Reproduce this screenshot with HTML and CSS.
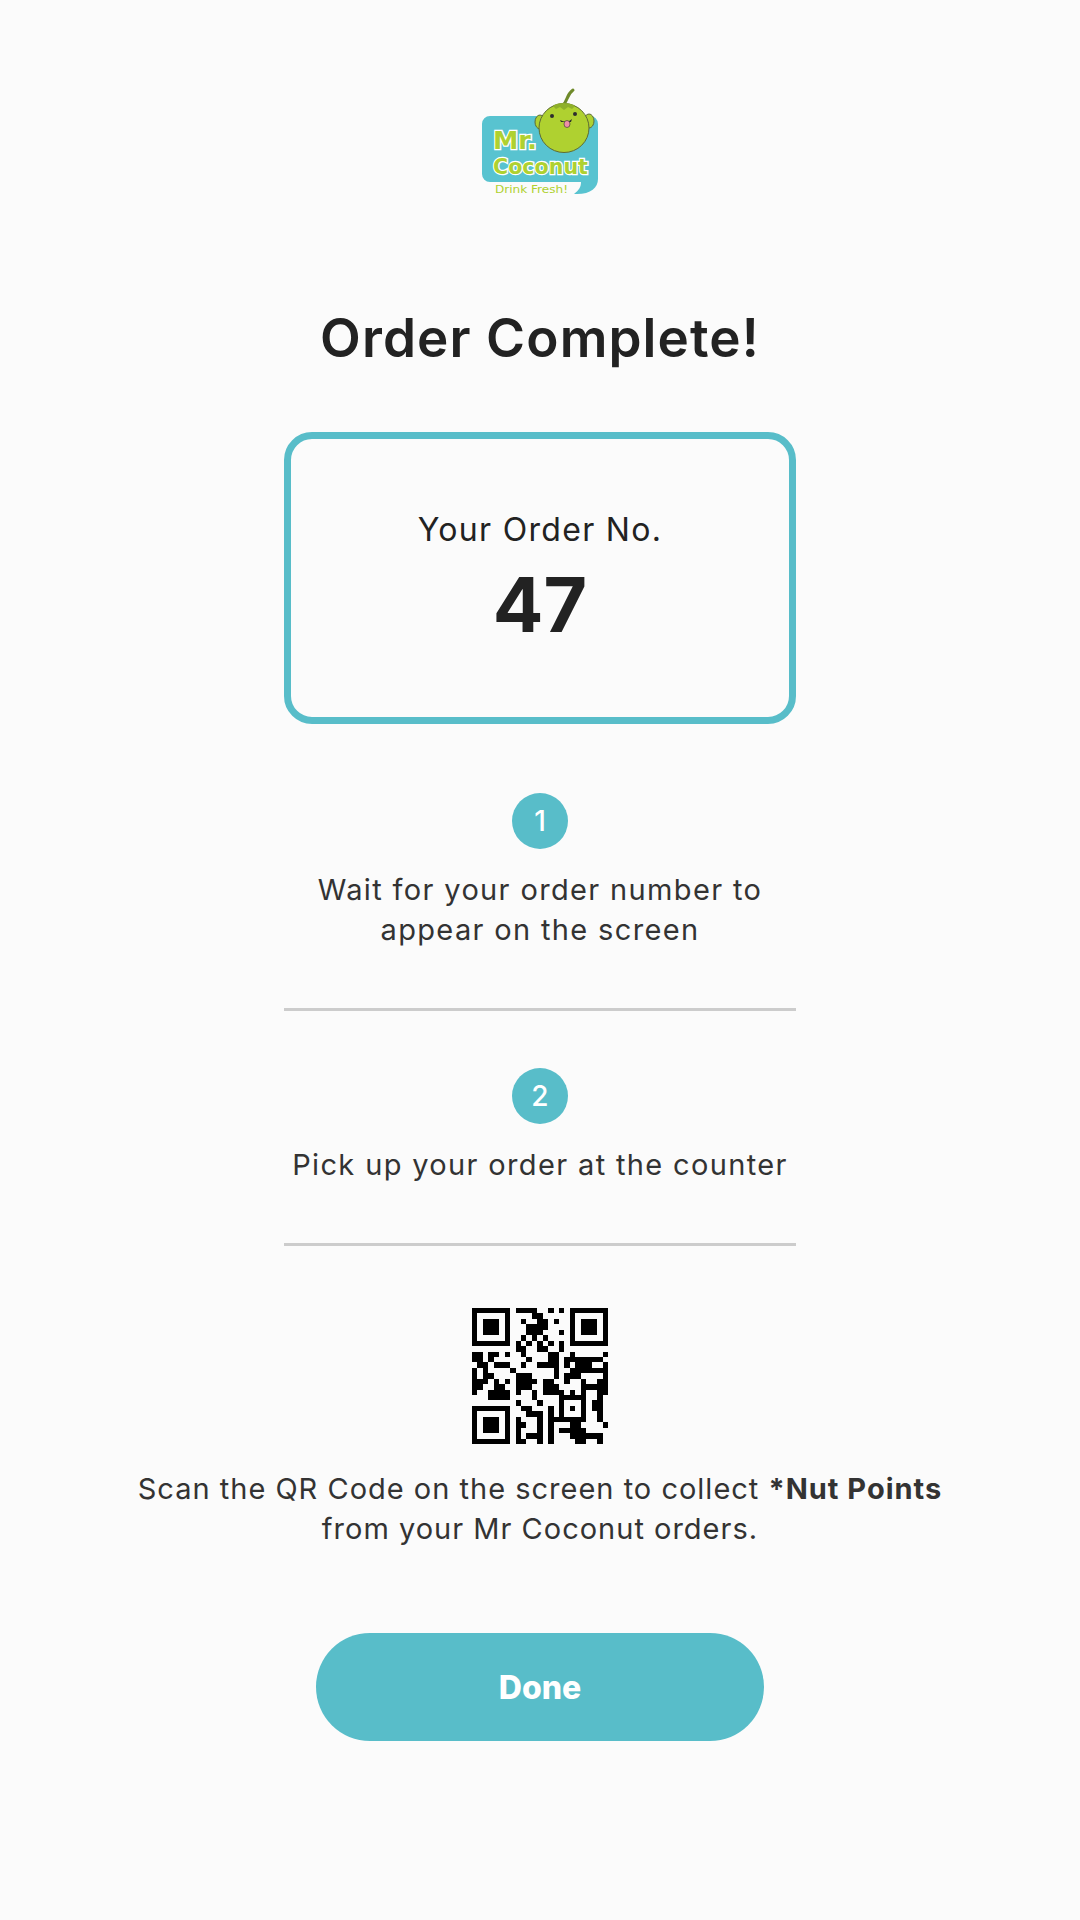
FILE: index.html
```html
<!DOCTYPE html>
<html lang="en">
<head>
    <meta charset="UTF-8">
    <meta name="viewport" content="width=device-width, initial-scale=1.0">
    <title>Order Complete</title>
    <link rel="stylesheet" href="styles.css">
</head>
<body>
    <div class="container">
        <svg class="logo" viewBox="0 0 160 130" role="img" aria-label="Mr. Coconut">
            <path class="logo-bubble" d="M30 41H130a8 8 0 0 1 8 8V104C138 113 130 120 114 119C119 115 121 112 121 107H30a8 8 0 0 1-8-8V49a8 8 0 0 1 8-8z"/>
            <path class="logo-stem" d="M103 30C108 26 106 20 113 15"/>
            <ellipse class="logo-body" cx="80" cy="47" rx="5" ry="7"/>
            <ellipse class="logo-body" cx="129" cy="46" rx="5" ry="7"/>
            <ellipse class="logo-body" cx="104" cy="53" rx="25" ry="24.5"/>
            <path class="logo-cap" d="M93 31C97 27 110 27 115 31L112 34L108 32L104 35L100 32L96 34z"/>
            <circle class="logo-eye" cx="92" cy="41" r="2"/>
            <circle class="logo-eye" cx="115" cy="39" r="2"/>
            <path class="logo-eye" d="M100 45Q107 49 112 44L111 47H101z"/>
            <ellipse class="logo-tongue" cx="107" cy="49" rx="3" ry="3.5"/>
            <text class="logo-name" x="33" y="74" font-size="25" textLength="44" lengthAdjust="spacingAndGlyphs">Mr.</text>
            <text class="logo-name" x="33" y="99" font-size="22" textLength="95" lengthAdjust="spacingAndGlyphs">Coconut</text>
            <text class="logo-tag" x="35" y="118" font-size="10" textLength="73" lengthAdjust="spacingAndGlyphs">Drink Fresh!</text>
        </svg>

        <h1>Order Complete!</h1>

        <div class="order-box">
            <div class="order-label">Your Order No.</div>
            <div class="order-number">47</div>
        </div>

        <div class="step step-first">
            <div class="step-badge">1</div>
            <p>Wait for your order number to<br>appear on the screen</p>
        </div>
        <div class="step step-second">
            <div class="step-badge">2</div>
            <p>Pick up your order at the counter</p>
        </div>

        <svg class="qr" viewBox="0 0 25 25" role="img" aria-label="QR code">
            <path d="M0 .5h7m1 0h4m2 0h1m1 0h1m1 0h7M0 1.5h1m5 0h1m4 0h2m5 0h1m5 0h1M0 2.5h1m1 0h3m1 0h1m2 0h1m2 0h2m1 0h1m2 0h1m1 0h3m1 0h1M0 3.5h1m1 0h3m1 0h1m3 0h4m4 0h1m1 0h3m1 0h1M0 4.5h1m1 0h3m1 0h1m3 0h3m3 0h1m1 0h1m1 0h3m1 0h1M0 5.5h1m5 0h1m2 0h1m1 0h1m1 0h1m4 0h1m5 0h1M0 6.5h7m1 0h1m1 0h1m1 0h1m1 0h1m1 0h1m1 0h7M8 7.5h2m2 0h2m2 0h1M0 8.5h2m1 0h2m1 0h1m2 0h1m4 0h2m2 0h1m5 0h1M0 9.5h2m1 0h1m6 0h1m3 0h2m1 0h7M1 10.5h2m1 0h3m2 0h1m2 0h4m1 0h1m1 0h3m2 0h1M0 11.5h1m1 0h1m4 0h1m7 0h1m2 0h7M0 12.5h1m1 0h2m4 0h3m4 0h1m1 0h3m4 0h1M0 13.5h3m1 0h1m1 0h1m1 0h4m1 0h2m2 0h1m2 0h1m2 0h2M0 14.5h2m2 0h2m2 0h3m2 0h3m4 0h5M0 15.5h1m2 0h4m1 0h1m2 0h1m1 0h4m1 0h1m1 0h1m2 0h2M3 16.5h4m4 0h1m4 0h5m2 0h1M8 17.5h1m3 0h1m3 0h1m3 0h1m1 0h2M0 18.5h7m2 0h2m3 0h1m1 0h1m1 0h1m1 0h1m1 0h2M0 19.5h1m5 0h1m3 0h3m1 0h1m1 0h1m3 0h1m2 0h1M0 20.5h1m1 0h3m1 0h1m1 0h1m3 0h1m1 0h7m2 0h1M0 21.5h1m1 0h3m1 0h1m1 0h2m2 0h1m1 0h1m3 0h2m4 0h1M0 22.5h1m1 0h3m1 0h1m1 0h1m3 0h1m1 0h1m1 0h5M0 23.5h1m5 0h1m1 0h1m1 0h3m1 0h1m3 0h6M0 24.5h7m1 0h2m2 0h1m1 0h1m4 0h2m2 0h1"/>
        </svg>

        <p class="scan-text">Scan the QR Code on the screen to collect <strong>*Nut Points</strong><br>from your Mr Coconut orders.</p>

        <button class="done-button">Done</button>
    </div>
</body>
</html>
```

FILE: styles.css
```css
/* General Styles */
body {
    font-family: 'Inter', 'Noto Sans', sans-serif;
    margin: 0;
    padding: 0;
    background-color: #fbfbfb;
    color: #333;
}

.container {
    height: 1920px;
    padding-top: 75px;
    box-sizing: border-box;
    display: flex;
    flex-direction: column;
    align-items: center;
    text-align: center;
}

/* Logo */
.logo {
    display: block;
    width: 160px;
    height: 130px;
}

.logo-bubble {
    fill: #58c3d0;
}

.logo-stem {
    fill: none;
    stroke: #6f8a2a;
    stroke-width: 3;
    stroke-linecap: round;
}

.logo-body {
    fill: #afd130;
    stroke: #5d6b35;
    stroke-width: 1;
}

.logo-cap {
    fill: #8fb02a;
}

.logo-eye {
    fill: #2d2d2d;
}

.logo-tongue {
    fill: #ee8fa8;
    stroke: #2d2d2d;
    stroke-width: .6;
}

.logo-name {
    font-family: 'DejaVu Sans', sans-serif;
    font-weight: bold;
    fill: #afd130;
    stroke: #fff;
    stroke-width: 2.5;
    paint-order: stroke;
}

.logo-tag {
    font-family: 'DejaVu Sans', sans-serif;
    fill: #afd130;
}

h1 {
    margin: 98px 0 0;
    font-size: 53px;
    line-height: 70px;
    font-weight: 600;
    letter-spacing: 1.1px;
    color: #222;
}

/* Order box */
.order-box {
    width: 512px;
    height: 292px;
    margin-top: 59px;
    box-sizing: border-box;
    border: 7px solid #58bdc9;
    border-radius: 28px;
    padding-top: 68px;
}

.order-label {
    font-size: 32px;
    line-height: 46px;
    letter-spacing: 1.3px;
    color: #222;
}

.order-number {
    margin-top: 7px;
    font-size: 75px;
    line-height: 90px;
    font-weight: 700;
    color: #222;
}

/* Steps */
.step {
    width: 512px;
    border-bottom: 3px solid #ccc;
    box-sizing: border-box;
}

.step p {
    margin: 21px 0 0;
    font-size: 29px;
    line-height: 40px;
    letter-spacing: 1.35px;
}

.step-first {
    height: 218px;
    margin-top: 69px;
}

.step-second {
    height: 178px;
    margin-top: 57px;
}

.step-badge {
    width: 56px;
    height: 56px;
    margin: 0 auto;
    border-radius: 50%;
    background-color: #58bdc9;
    color: #fff;
    font-size: 28px;
    font-weight: 500;
    line-height: 56px;
}

/* QR */
.qr {
    display: block;
    width: 136px;
    height: 136px;
    margin-top: 62px;
    fill: none;
    stroke: #000;
    stroke-width: 1;
    shape-rendering: crispEdges;
}

.scan-text {
    margin: 25px 0 0;
    font-size: 29px;
    line-height: 40px;
    letter-spacing: 1px;
}

.scan-text strong {
    font-weight: 700;
}

.done-button {
    width: 448px;
    height: 108px;
    margin-top: 84px;
    border: none;
    border-radius: 54px;
    background-color: #58bdc9;
    color: #fff;
    font-family: inherit;
    font-size: 32px;
    font-weight: 800;
}
```
